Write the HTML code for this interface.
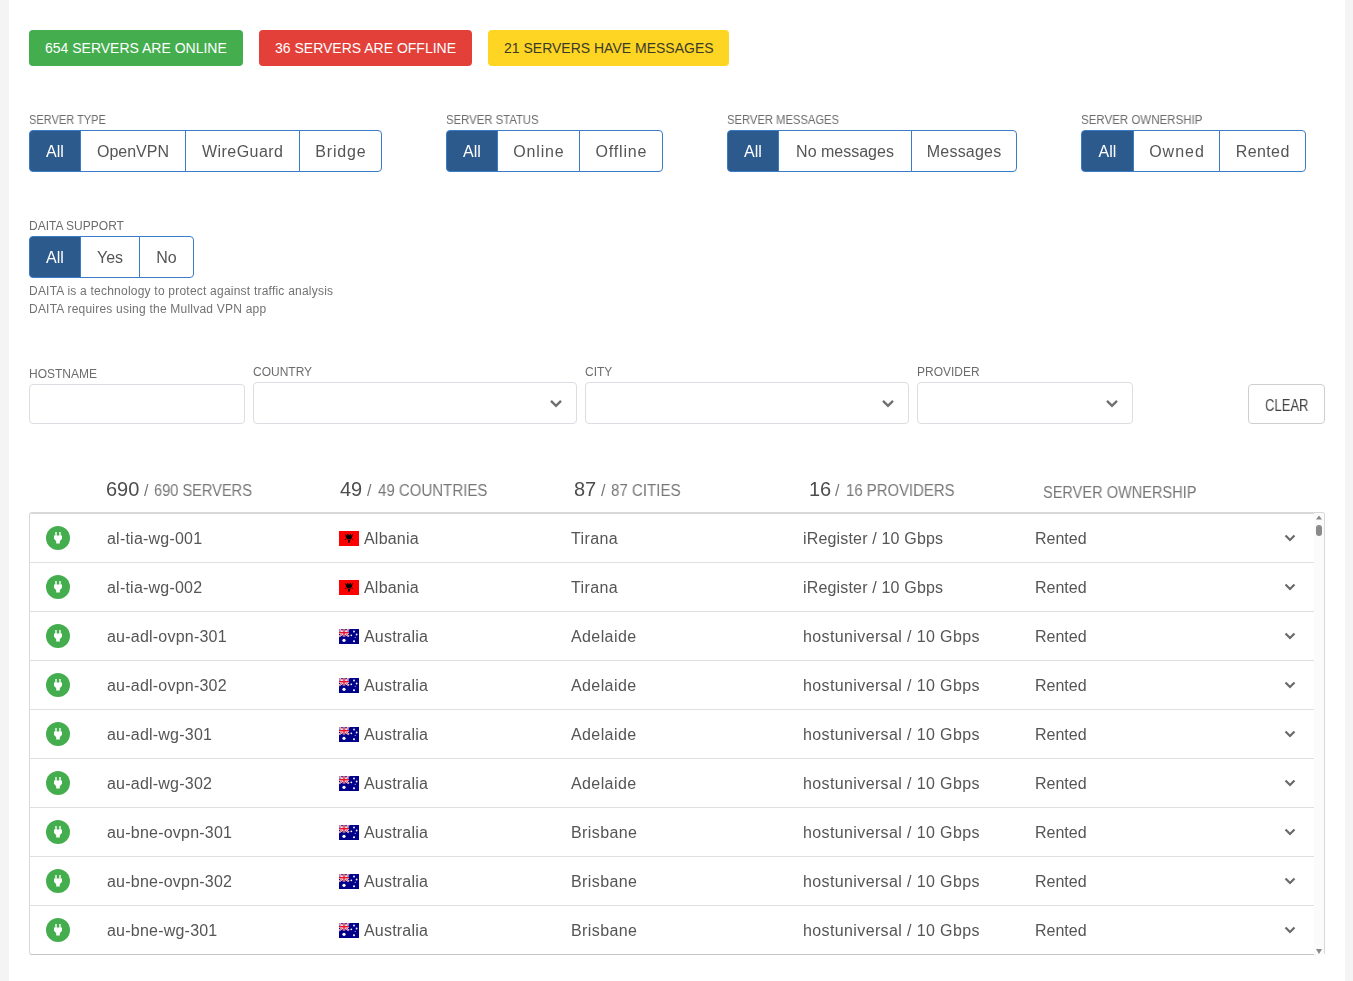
<!DOCTYPE html>
<html><head><meta charset="utf-8"><style>
*{box-sizing:border-box;margin:0;padding:0}
html,body{width:1353px;height:981px;overflow:hidden;background:#f4f4f4;font-family:"Liberation Sans",sans-serif;color:#555}
#page{position:absolute;left:9px;top:0;width:1336px;height:981px;background:#fff}
.badge{position:absolute;top:30px;height:36px;border-radius:4px;color:#fff;font-size:14px;line-height:36px;padding-left:16px;white-space:nowrap}
.lbl{position:absolute;font-size:12px;color:#6c6c6c;white-space:nowrap;line-height:14px;transform-origin:0 0}
.b{position:absolute;height:42px;border:1px solid #3b7cc6;background:#fff;font-size:16px;color:#555;text-align:center;line-height:42px;white-space:nowrap}
.b.on{background:#2c5a8c;color:#fff}
.b.f{border-radius:4px 0 0 4px}
.b.l{border-radius:0 4px 4px 0}
.note{position:absolute;left:29px;font-size:12px;color:#727272;white-space:nowrap;line-height:14px;letter-spacing:0.22px}
.inp{position:absolute;border:1px solid #dcdde2;border-radius:4px;background:#fff}
.lbl,.b,.note,.clr,.hdr,.row span{will-change:transform}
.schev{position:absolute;width:14px;height:9px}
.hdr{position:absolute;top:479px;font-size:16px;color:#777;white-space:nowrap;line-height:20px}
.hdr.big{font-size:20px;color:#4d4d4d}
.cap{letter-spacing:-0.6px}
#tbl{position:absolute;left:29px;top:512px;width:1296px;height:443px;border:1px solid #d8d8d8;border-bottom-color:#c4c4c4;border-radius:3px;overflow:hidden;background:#fff}
.row{position:absolute;left:0;width:1285px;height:49px;border-bottom:1px solid #e0e0e0}
.row span{position:absolute;top:1px;line-height:48px;font-size:16px;color:#555;white-space:nowrap}
.ic{position:absolute;left:16px;top:12px;width:24px;height:24px}
.flag{position:absolute;top:17px;width:20px;height:15px}
.rchev{position:absolute;left:1254px;top:20px;width:12px;height:9px}
.sb{position:absolute;left:1284px;top:0;width:10px;height:100%;background:#fbfbfb}
.thumb{position:absolute;left:1286px;top:12px;width:6px;height:11px;border-radius:3px;background:#8a8a8a}
.sbu{position:absolute;left:1286px;top:2px;width:6px;height:5px}
.sbd{display:none}
</style></head><body>
<div id="page"></div>
<div class="badge" style="left:29px;width:214px;background:#44ad4e">654 SERVERS ARE ONLINE</div>
<div class="badge" style="left:259px;width:213px;background:#e34039">36 SERVERS ARE OFFLINE</div>
<div class="badge" style="left:488px;width:241px;background:#ffd524;color:#3a3a2a">21 SERVERS HAVE MESSAGES</div>
<div class="lbl" style="left:29px;top:113px;transform:scaleX(0.92)">SERVER TYPE</div>
<div class="b on f" style="left:29px;top:130px;width:52px">All</div>
<div class="b" style="left:80px;top:130px;width:106px">OpenVPN</div>
<div class="b" style="left:185px;top:130px;width:115px;letter-spacing:0.45px;text-indent:0.45px">WireGuard</div>
<div class="b l" style="left:299px;top:130px;width:83px;letter-spacing:0.8px;text-indent:0.8px">Bridge</div>
<div class="lbl" style="left:446px;top:113px;transform:scaleX(0.945)">SERVER STATUS</div>
<div class="b on f" style="left:446px;top:130px;width:52px">All</div>
<div class="b" style="left:497px;top:130px;width:83px;letter-spacing:0.8px;text-indent:0.8px">Online</div>
<div class="b l" style="left:579px;top:130px;width:84px;letter-spacing:0.8px;text-indent:0.8px">Offline</div>
<div class="lbl" style="left:727px;top:113px;transform:scaleX(0.935)">SERVER MESSAGES</div>
<div class="b on f" style="left:727px;top:130px;width:52px">All</div>
<div class="b" style="left:778px;top:130px;width:134px">No messages</div>
<div class="b l" style="left:911px;top:130px;width:106px;letter-spacing:0.2px;text-indent:0.2px">Messages</div>
<div class="lbl" style="left:1081px;top:113px;transform:scaleX(0.96)">SERVER OWNERSHIP</div>
<div class="b on f" style="left:1081px;top:130px;width:53px">All</div>
<div class="b" style="left:1133px;top:130px;width:87px;letter-spacing:1px;text-indent:1px">Owned</div>
<div class="b l" style="left:1219px;top:130px;width:87px;letter-spacing:0.4px;text-indent:0.4px">Rented</div>
<div class="lbl" style="left:29px;top:219px;transform:scaleX(1.0)">DAITA SUPPORT</div>
<div class="b on f" style="left:29px;top:236px;width:52px">All</div>
<div class="b" style="left:80px;top:236px;width:60px">Yes</div>
<div class="b l" style="left:139px;top:236px;width:55px">No</div>
<div class="note" style="top:284px">DAITA is a technology to protect against traffic analysis</div>
<div class="note" style="top:302px">DAITA requires using the Mullvad VPN app</div>
<div class="lbl" style="left:29px;top:367px">HOSTNAME</div>
<div class="inp" style="left:29px;top:384px;width:216px;height:40px"></div>
<div class="lbl" style="left:253px;top:365px">COUNTRY</div>
<div class="inp" style="left:253px;top:382px;width:324px;height:42px"></div>
<svg class="schev" viewBox="0 0 14 9" style="left:549px;top:399px"><path d="M2 1.8l5 5 5-5" stroke="#707070" stroke-width="2.4" fill="none"/></svg>
<div class="lbl" style="left:585px;top:365px">CITY</div>
<div class="inp" style="left:585px;top:382px;width:324px;height:42px"></div>
<svg class="schev" viewBox="0 0 14 9" style="left:881px;top:399px"><path d="M2 1.8l5 5 5-5" stroke="#707070" stroke-width="2.4" fill="none"/></svg>
<div class="lbl" style="left:917px;top:365px">PROVIDER</div>
<div class="inp" style="left:917px;top:382px;width:216px;height:42px"></div>
<svg class="schev" viewBox="0 0 14 9" style="left:1105px;top:399px"><path d="M2 1.8l5 5 5-5" stroke="#707070" stroke-width="2.4" fill="none"/></svg>
<div class="inp" style="left:1248px;top:384px;width:77px;height:40px;border-color:#cfcfcf"></div><div class="clr" style="position:absolute;left:1265px;top:396px;font-size:16px;line-height:20px;color:#444;white-space:nowrap;transform:scaleX(0.815);transform-origin:0 0">CLEAR</div>
<div class="hdr big" style="left:106px">690</div><div class="hdr" style="left:144px;top:481px">/</div><div class="hdr" style="left:154px;top:481px;transform:scaleX(0.912);transform-origin:0 0">690 SERVERS</div>
<div class="hdr big" style="left:340px">49</div><div class="hdr" style="left:367px;top:481px">/</div><div class="hdr" style="left:378px;top:481px;transform:scaleX(0.939);transform-origin:0 0">49 COUNTRIES</div>
<div class="hdr big" style="left:574px">87</div><div class="hdr" style="left:601px;top:481px">/</div><div class="hdr" style="left:611px;top:481px;transform:scaleX(0.942);transform-origin:0 0">87 CITIES</div>
<div class="hdr big" style="left:809px">16</div><div class="hdr" style="left:835px;top:481px">/</div><div class="hdr" style="left:846px;top:481px;transform:scaleX(0.932);transform-origin:0 0">16 PROVIDERS</div>
<div class="hdr" style="left:1043px;top:483px;transform:scaleX(0.91);transform-origin:0 0">SERVER OWNERSHIP</div>
<div id="tbl"><div style="position:absolute;left:0;top:0;width:1284px;height:1px;background:#d8d8d8"></div><div class="row" style="top:1px"><svg class="ic" viewBox="0 0 24 24"><circle cx="12" cy="12" r="12" fill="#44ad4e"/><path d="M8 9.5h8v3.2l-2.2 2.6v2.3h-3.6v-2.3L8 12.7z M9.3 6h1.4v3.5H9.3z M13.3 6h1.4v3.5h-1.4z" fill="#fff"/></svg><span style="left:77px;letter-spacing:0.22px">al-tia-wg-001</span><svg class="flag" style="left:309px" viewBox="0 0 20 15"><rect width="20" height="15" fill="#f00"/><g fill="#000"><ellipse cx="10" cy="6.2" rx="2.9" ry="2.1"/><circle cx="8.6" cy="3.6" r="0.75"/><circle cx="11.4" cy="3.6" r="0.75"/><circle cx="6.4" cy="3.6" r="0.5" opacity=".7"/><circle cx="13.6" cy="3.6" r="0.5" opacity=".7"/><circle cx="7.2" cy="4.9" r="0.8"/><circle cx="12.8" cy="4.9" r="0.8"/><circle cx="6.5" cy="8.4" r="0.65" opacity=".8"/><circle cx="13.5" cy="8.4" r="0.65" opacity=".8"/><path d="M7.5 8.6h5l-1 .8z" opacity=".6"/><path d="M9 9h2l-.3 2.7h-1.4z"/></g></svg><span style="left:334px;letter-spacing:0.2px">Albania</span><span style="left:541px;letter-spacing:0.4px">Tirana</span><span style="left:773px;letter-spacing:0.17px">iRegister / 10 Gbps</span><span style="left:1005px">Rented</span><svg class="rchev" viewBox="0 0 12 9"><path d="M1.5 1.5L6 6l4.5-4.5" stroke="#6a6a6a" stroke-width="2.2" fill="none"/></svg></div>
<div class="row" style="top:50px"><svg class="ic" viewBox="0 0 24 24"><circle cx="12" cy="12" r="12" fill="#44ad4e"/><path d="M8 9.5h8v3.2l-2.2 2.6v2.3h-3.6v-2.3L8 12.7z M9.3 6h1.4v3.5H9.3z M13.3 6h1.4v3.5h-1.4z" fill="#fff"/></svg><span style="left:77px;letter-spacing:0.22px">al-tia-wg-002</span><svg class="flag" style="left:309px" viewBox="0 0 20 15"><rect width="20" height="15" fill="#f00"/><g fill="#000"><ellipse cx="10" cy="6.2" rx="2.9" ry="2.1"/><circle cx="8.6" cy="3.6" r="0.75"/><circle cx="11.4" cy="3.6" r="0.75"/><circle cx="6.4" cy="3.6" r="0.5" opacity=".7"/><circle cx="13.6" cy="3.6" r="0.5" opacity=".7"/><circle cx="7.2" cy="4.9" r="0.8"/><circle cx="12.8" cy="4.9" r="0.8"/><circle cx="6.5" cy="8.4" r="0.65" opacity=".8"/><circle cx="13.5" cy="8.4" r="0.65" opacity=".8"/><path d="M7.5 8.6h5l-1 .8z" opacity=".6"/><path d="M9 9h2l-.3 2.7h-1.4z"/></g></svg><span style="left:334px;letter-spacing:0.2px">Albania</span><span style="left:541px;letter-spacing:0.4px">Tirana</span><span style="left:773px;letter-spacing:0.17px">iRegister / 10 Gbps</span><span style="left:1005px">Rented</span><svg class="rchev" viewBox="0 0 12 9"><path d="M1.5 1.5L6 6l4.5-4.5" stroke="#6a6a6a" stroke-width="2.2" fill="none"/></svg></div>
<div class="row" style="top:99px"><svg class="ic" viewBox="0 0 24 24"><circle cx="12" cy="12" r="12" fill="#44ad4e"/><path d="M8 9.5h8v3.2l-2.2 2.6v2.3h-3.6v-2.3L8 12.7z M9.3 6h1.4v3.5H9.3z M13.3 6h1.4v3.5h-1.4z" fill="#fff"/></svg><span style="left:77px;letter-spacing:0.22px">au-adl-ovpn-301</span><svg class="flag" style="left:309px" viewBox="0 0 20 15"><rect width="20" height="15" fill="#00008b"/><path d="M0 0L10 7.5M10 0L0 7.5" stroke="#fff" stroke-width="1.8"/><path d="M0 0L10 7.5M10 0L0 7.5" stroke="#e8112d" stroke-width="0.7"/><path d="M5 0v7.5M0 3.75h10" stroke="#fff" stroke-width="2.5"/><path d="M5 0v7.5M0 3.75h10" stroke="#e8112d" stroke-width="1.4"/><circle cx="5" cy="11.3" r="1.6" fill="#fff"/><circle cx="15" cy="2.5" r="0.9" fill="#fff"/><circle cx="12.3" cy="6.3" r="0.9" fill="#fff"/><circle cx="17.6" cy="5.5" r="0.9" fill="#fff"/><circle cx="15" cy="12.3" r="1" fill="#fff"/><circle cx="16.2" cy="8.3" r="0.5" fill="#fff"/></svg><span style="left:334px;letter-spacing:0.2px">Australia</span><span style="left:541px;letter-spacing:0.4px">Adelaide</span><span style="left:773px;letter-spacing:0.38px">hostuniversal / 10 Gbps</span><span style="left:1005px">Rented</span><svg class="rchev" viewBox="0 0 12 9"><path d="M1.5 1.5L6 6l4.5-4.5" stroke="#6a6a6a" stroke-width="2.2" fill="none"/></svg></div>
<div class="row" style="top:148px"><svg class="ic" viewBox="0 0 24 24"><circle cx="12" cy="12" r="12" fill="#44ad4e"/><path d="M8 9.5h8v3.2l-2.2 2.6v2.3h-3.6v-2.3L8 12.7z M9.3 6h1.4v3.5H9.3z M13.3 6h1.4v3.5h-1.4z" fill="#fff"/></svg><span style="left:77px;letter-spacing:0.22px">au-adl-ovpn-302</span><svg class="flag" style="left:309px" viewBox="0 0 20 15"><rect width="20" height="15" fill="#00008b"/><path d="M0 0L10 7.5M10 0L0 7.5" stroke="#fff" stroke-width="1.8"/><path d="M0 0L10 7.5M10 0L0 7.5" stroke="#e8112d" stroke-width="0.7"/><path d="M5 0v7.5M0 3.75h10" stroke="#fff" stroke-width="2.5"/><path d="M5 0v7.5M0 3.75h10" stroke="#e8112d" stroke-width="1.4"/><circle cx="5" cy="11.3" r="1.6" fill="#fff"/><circle cx="15" cy="2.5" r="0.9" fill="#fff"/><circle cx="12.3" cy="6.3" r="0.9" fill="#fff"/><circle cx="17.6" cy="5.5" r="0.9" fill="#fff"/><circle cx="15" cy="12.3" r="1" fill="#fff"/><circle cx="16.2" cy="8.3" r="0.5" fill="#fff"/></svg><span style="left:334px;letter-spacing:0.2px">Australia</span><span style="left:541px;letter-spacing:0.4px">Adelaide</span><span style="left:773px;letter-spacing:0.38px">hostuniversal / 10 Gbps</span><span style="left:1005px">Rented</span><svg class="rchev" viewBox="0 0 12 9"><path d="M1.5 1.5L6 6l4.5-4.5" stroke="#6a6a6a" stroke-width="2.2" fill="none"/></svg></div>
<div class="row" style="top:197px"><svg class="ic" viewBox="0 0 24 24"><circle cx="12" cy="12" r="12" fill="#44ad4e"/><path d="M8 9.5h8v3.2l-2.2 2.6v2.3h-3.6v-2.3L8 12.7z M9.3 6h1.4v3.5H9.3z M13.3 6h1.4v3.5h-1.4z" fill="#fff"/></svg><span style="left:77px;letter-spacing:0.22px">au-adl-wg-301</span><svg class="flag" style="left:309px" viewBox="0 0 20 15"><rect width="20" height="15" fill="#00008b"/><path d="M0 0L10 7.5M10 0L0 7.5" stroke="#fff" stroke-width="1.8"/><path d="M0 0L10 7.5M10 0L0 7.5" stroke="#e8112d" stroke-width="0.7"/><path d="M5 0v7.5M0 3.75h10" stroke="#fff" stroke-width="2.5"/><path d="M5 0v7.5M0 3.75h10" stroke="#e8112d" stroke-width="1.4"/><circle cx="5" cy="11.3" r="1.6" fill="#fff"/><circle cx="15" cy="2.5" r="0.9" fill="#fff"/><circle cx="12.3" cy="6.3" r="0.9" fill="#fff"/><circle cx="17.6" cy="5.5" r="0.9" fill="#fff"/><circle cx="15" cy="12.3" r="1" fill="#fff"/><circle cx="16.2" cy="8.3" r="0.5" fill="#fff"/></svg><span style="left:334px;letter-spacing:0.2px">Australia</span><span style="left:541px;letter-spacing:0.4px">Adelaide</span><span style="left:773px;letter-spacing:0.38px">hostuniversal / 10 Gbps</span><span style="left:1005px">Rented</span><svg class="rchev" viewBox="0 0 12 9"><path d="M1.5 1.5L6 6l4.5-4.5" stroke="#6a6a6a" stroke-width="2.2" fill="none"/></svg></div>
<div class="row" style="top:246px"><svg class="ic" viewBox="0 0 24 24"><circle cx="12" cy="12" r="12" fill="#44ad4e"/><path d="M8 9.5h8v3.2l-2.2 2.6v2.3h-3.6v-2.3L8 12.7z M9.3 6h1.4v3.5H9.3z M13.3 6h1.4v3.5h-1.4z" fill="#fff"/></svg><span style="left:77px;letter-spacing:0.22px">au-adl-wg-302</span><svg class="flag" style="left:309px" viewBox="0 0 20 15"><rect width="20" height="15" fill="#00008b"/><path d="M0 0L10 7.5M10 0L0 7.5" stroke="#fff" stroke-width="1.8"/><path d="M0 0L10 7.5M10 0L0 7.5" stroke="#e8112d" stroke-width="0.7"/><path d="M5 0v7.5M0 3.75h10" stroke="#fff" stroke-width="2.5"/><path d="M5 0v7.5M0 3.75h10" stroke="#e8112d" stroke-width="1.4"/><circle cx="5" cy="11.3" r="1.6" fill="#fff"/><circle cx="15" cy="2.5" r="0.9" fill="#fff"/><circle cx="12.3" cy="6.3" r="0.9" fill="#fff"/><circle cx="17.6" cy="5.5" r="0.9" fill="#fff"/><circle cx="15" cy="12.3" r="1" fill="#fff"/><circle cx="16.2" cy="8.3" r="0.5" fill="#fff"/></svg><span style="left:334px;letter-spacing:0.2px">Australia</span><span style="left:541px;letter-spacing:0.4px">Adelaide</span><span style="left:773px;letter-spacing:0.38px">hostuniversal / 10 Gbps</span><span style="left:1005px">Rented</span><svg class="rchev" viewBox="0 0 12 9"><path d="M1.5 1.5L6 6l4.5-4.5" stroke="#6a6a6a" stroke-width="2.2" fill="none"/></svg></div>
<div class="row" style="top:295px"><svg class="ic" viewBox="0 0 24 24"><circle cx="12" cy="12" r="12" fill="#44ad4e"/><path d="M8 9.5h8v3.2l-2.2 2.6v2.3h-3.6v-2.3L8 12.7z M9.3 6h1.4v3.5H9.3z M13.3 6h1.4v3.5h-1.4z" fill="#fff"/></svg><span style="left:77px;letter-spacing:0.22px">au-bne-ovpn-301</span><svg class="flag" style="left:309px" viewBox="0 0 20 15"><rect width="20" height="15" fill="#00008b"/><path d="M0 0L10 7.5M10 0L0 7.5" stroke="#fff" stroke-width="1.8"/><path d="M0 0L10 7.5M10 0L0 7.5" stroke="#e8112d" stroke-width="0.7"/><path d="M5 0v7.5M0 3.75h10" stroke="#fff" stroke-width="2.5"/><path d="M5 0v7.5M0 3.75h10" stroke="#e8112d" stroke-width="1.4"/><circle cx="5" cy="11.3" r="1.6" fill="#fff"/><circle cx="15" cy="2.5" r="0.9" fill="#fff"/><circle cx="12.3" cy="6.3" r="0.9" fill="#fff"/><circle cx="17.6" cy="5.5" r="0.9" fill="#fff"/><circle cx="15" cy="12.3" r="1" fill="#fff"/><circle cx="16.2" cy="8.3" r="0.5" fill="#fff"/></svg><span style="left:334px;letter-spacing:0.2px">Australia</span><span style="left:541px;letter-spacing:0.4px">Brisbane</span><span style="left:773px;letter-spacing:0.38px">hostuniversal / 10 Gbps</span><span style="left:1005px">Rented</span><svg class="rchev" viewBox="0 0 12 9"><path d="M1.5 1.5L6 6l4.5-4.5" stroke="#6a6a6a" stroke-width="2.2" fill="none"/></svg></div>
<div class="row" style="top:344px"><svg class="ic" viewBox="0 0 24 24"><circle cx="12" cy="12" r="12" fill="#44ad4e"/><path d="M8 9.5h8v3.2l-2.2 2.6v2.3h-3.6v-2.3L8 12.7z M9.3 6h1.4v3.5H9.3z M13.3 6h1.4v3.5h-1.4z" fill="#fff"/></svg><span style="left:77px;letter-spacing:0.22px">au-bne-ovpn-302</span><svg class="flag" style="left:309px" viewBox="0 0 20 15"><rect width="20" height="15" fill="#00008b"/><path d="M0 0L10 7.5M10 0L0 7.5" stroke="#fff" stroke-width="1.8"/><path d="M0 0L10 7.5M10 0L0 7.5" stroke="#e8112d" stroke-width="0.7"/><path d="M5 0v7.5M0 3.75h10" stroke="#fff" stroke-width="2.5"/><path d="M5 0v7.5M0 3.75h10" stroke="#e8112d" stroke-width="1.4"/><circle cx="5" cy="11.3" r="1.6" fill="#fff"/><circle cx="15" cy="2.5" r="0.9" fill="#fff"/><circle cx="12.3" cy="6.3" r="0.9" fill="#fff"/><circle cx="17.6" cy="5.5" r="0.9" fill="#fff"/><circle cx="15" cy="12.3" r="1" fill="#fff"/><circle cx="16.2" cy="8.3" r="0.5" fill="#fff"/></svg><span style="left:334px;letter-spacing:0.2px">Australia</span><span style="left:541px;letter-spacing:0.4px">Brisbane</span><span style="left:773px;letter-spacing:0.38px">hostuniversal / 10 Gbps</span><span style="left:1005px">Rented</span><svg class="rchev" viewBox="0 0 12 9"><path d="M1.5 1.5L6 6l4.5-4.5" stroke="#6a6a6a" stroke-width="2.2" fill="none"/></svg></div>
<div class="row" style="top:393px"><svg class="ic" viewBox="0 0 24 24"><circle cx="12" cy="12" r="12" fill="#44ad4e"/><path d="M8 9.5h8v3.2l-2.2 2.6v2.3h-3.6v-2.3L8 12.7z M9.3 6h1.4v3.5H9.3z M13.3 6h1.4v3.5h-1.4z" fill="#fff"/></svg><span style="left:77px;letter-spacing:0.22px">au-bne-wg-301</span><svg class="flag" style="left:309px" viewBox="0 0 20 15"><rect width="20" height="15" fill="#00008b"/><path d="M0 0L10 7.5M10 0L0 7.5" stroke="#fff" stroke-width="1.8"/><path d="M0 0L10 7.5M10 0L0 7.5" stroke="#e8112d" stroke-width="0.7"/><path d="M5 0v7.5M0 3.75h10" stroke="#fff" stroke-width="2.5"/><path d="M5 0v7.5M0 3.75h10" stroke="#e8112d" stroke-width="1.4"/><circle cx="5" cy="11.3" r="1.6" fill="#fff"/><circle cx="15" cy="2.5" r="0.9" fill="#fff"/><circle cx="12.3" cy="6.3" r="0.9" fill="#fff"/><circle cx="17.6" cy="5.5" r="0.9" fill="#fff"/><circle cx="15" cy="12.3" r="1" fill="#fff"/><circle cx="16.2" cy="8.3" r="0.5" fill="#fff"/></svg><span style="left:334px;letter-spacing:0.2px">Australia</span><span style="left:541px;letter-spacing:0.4px">Brisbane</span><span style="left:773px;letter-spacing:0.38px">hostuniversal / 10 Gbps</span><span style="left:1005px">Rented</span><svg class="rchev" viewBox="0 0 12 9"><path d="M1.5 1.5L6 6l4.5-4.5" stroke="#6a6a6a" stroke-width="2.2" fill="none"/></svg></div><div class="sb"></div><div class="thumb"></div><svg class="sbu" viewBox="0 0 6 4"><path d="M0 4L3 0l3 4z" fill="#888"/></svg><svg class="sbd" viewBox="0 0 6 4"><path d="M0 0L3 4l3-4z" fill="#888"/></svg></div><div style="position:absolute;left:1314px;top:953px;width:10px;height:3px;background:#fbfbfb"></div><svg style="position:absolute;left:1316px;top:949px;width:6px;height:5px" viewBox="0 0 6 5"><path d="M0 0h6L3 5z" fill="#888"/></svg>
</body></html>
